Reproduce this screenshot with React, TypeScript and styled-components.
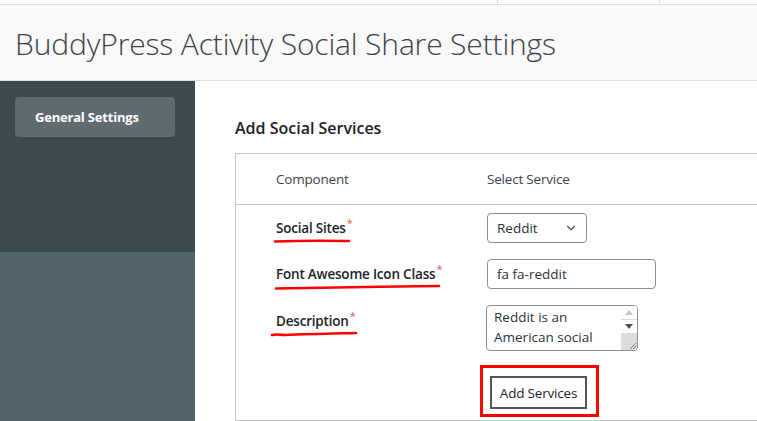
import React from "react";
import styled, { createGlobalStyle } from "styled-components";
import { ChevronDown } from "lucide-react";

const GlobalStyle = createGlobalStyle`
  html, body {
    margin: 0;
    padding: 0;
    background: #fff;
  }
  body {
    font-family: "Open Sans", "Noto Sans", sans-serif;
    color: #1d2327;
    overflow: hidden;
  }
`;

const Page = styled.div`
  width: 757px;
  height: 421px;
  display: flex;
  flex-direction: column;
  overflow: hidden;
`;

const TopStrip = styled.div`
  height: 4px;
  display: flex;
  border-bottom: 1px solid #dcdcde;
  background: #fff;
`;

const StripCell = styled.div<{ $w?: number }>`
  width: ${(p) => (p.$w ? `${p.$w}px` : "auto")};
  flex: ${(p) => (p.$w ? "none" : "1")};
  border-right: 1px solid #dcdcde;
  &:last-child {
    border-right: none;
  }
`;

const Header = styled.div`
  height: 76px;
  background: #f9f9f9;
  border-bottom: 1px solid #e0e0e0;
  display: flex;
  align-items: center;
  padding: 2px 0 0 15px;
  box-sizing: border-box;
`;

const Title = styled.h1`
  margin: 0;
  font-family: "Open Sans", sans-serif;
  font-weight: 300;
  font-size: 30px;
  letter-spacing: -0.15px;
  color: #3c434a;
`;

const Body = styled.div`
  flex: 1;
  display: flex;
  min-height: 0;
`;

const Sidebar = styled.div`
  width: 195px;
  flex: none;
  display: flex;
  flex-direction: column;
  background: #50646a;
`;

const SidebarNav = styled.div`
  height: 171px;
  background: #3c4a4f;
  padding: 16px 20px 0 15px;
  box-sizing: border-box;
`;

const NavItem = styled.div<{ $active?: boolean }>`
  height: 40px;
  border-radius: 4px;
  background: ${(p) => (p.$active ? "#5f6b70" : "transparent")};
  color: #fff;
  font-weight: 700;
  font-size: 13px;
  display: flex;
  align-items: center;
  padding-left: 20px;
  letter-spacing: -0.2px;
`;

const Main = styled.div`
  flex: 1;
  padding: 37px 0 0 40px;
  min-width: 0;
`;

const SectionTitle = styled.h2`
  margin: 0 0 15px;
  font-size: 16px;
  line-height: 20px;
  font-weight: 600;
  color: #1d2327;
`;

const TableBox = styled.div`
  width: 560px;
  border: 1px solid #c3c4c7;
  background: #fff;
  padding-bottom: 3px;
`;

const Row = styled.div<{ $head?: boolean; $gap?: number }>`
  display: grid;
  grid-template-columns: 251px 1fr;
  align-items: ${(p) => (p.$head ? "center" : "start")};
  height: ${(p) => (p.$head ? "50px" : "auto")};
  border-bottom: ${(p) => (p.$head ? "1px solid #c3c4c7" : "none")};
  margin-top: ${(p) => (p.$head ? 0 : p.$gap ?? 16)}px;
`;

const HeadCell = styled.div<{ $first?: boolean }>`
  font-size: 13.5px;
  color: #3c434a;
  padding-left: ${(p) => (p.$first ? "40px" : "0")};
  letter-spacing: -0.2px;
`;

const LabelCell = styled.div<{ $top?: number }>`
  padding: ${(p) => p.$top ?? 3}px 0 0 40px;
  height: 30px;
  box-sizing: border-box;
`;

const LabelWrap = styled.div`
  display: inline-flex;
  flex-direction: column;
`;

const LabelText = styled.span`
  font-size: 13.5px;
  line-height: 20px;
  height: 20px;
  font-weight: 600;
  color: #1d2327;
  letter-spacing: -0.2px;
  white-space: nowrap;
`;

const Star = styled.span`
  color: #e65a5a;
  font-size: 11px;
  font-weight: 400;
  position: relative;
  top: -6px;
  margin-left: 1px;
`;

const Ink = styled.svg<{ $dx: number }>`
  display: block;
  margin-left: ${(p) => p.$dx}px;
  margin-top: 0;
  overflow: visible;
`;

const Control = styled.div`
  font-size: 13.5px;
  color: #2c3338;
`;

const SelectBox = styled.div`
  width: 100px;
  height: 30px;
  box-sizing: border-box;
  border: 1px solid #8c8f94;
  border-radius: 4px;
  display: flex;
  align-items: center;
  justify-content: space-between;
  padding: 0 8px 0 9px;
  color: #50575e;
  span {
    color: #2c3338;
  }
`;

const TextInput = styled.div`
  width: 169px;
  height: 30px;
  box-sizing: border-box;
  border: 1px solid #8c8f94;
  border-radius: 4px;
  display: flex;
  align-items: center;
  padding-left: 9px;
`;

const AreaBox = styled.div`
  width: 152px;
  height: 46px;
  box-sizing: border-box;
  border: 1px solid #8c8f94;
  border-radius: 4px;
  display: flex;
  overflow: hidden;
  margin-left: -1px;
`;

const AreaText = styled.div`
  flex: 1;
  padding: 1px 0 0 7px;
  line-height: 20px;
  white-space: nowrap;
`;

const ScrollBar = styled.div`
  width: 16px;
  display: flex;
  flex-direction: column;
  background: #f1f1f1;
`;

const ScrollBtn = styled.div<{ $dim?: boolean }>`
  height: 13px;
  display: flex;
  align-items: center;
  justify-content: center;
  background: #fff;
  color: ${(p) => (p.$dim ? "#c2c2c2" : "#505050")};
  border-bottom: ${(p) => (p.$dim ? "1px solid #d8d8d8" : "none")};
`;

const ScrollTrack = styled.div`
  flex: 1;
  background: #dcdcdc;
  display: flex;
  align-items: flex-end;
  justify-content: flex-end;
`;

const RedFrame = styled.div`
  display: inline-block;
  border: 3px solid #ff0000;
  padding: 8px 9px 5px 7px;
  margin-left: -7px;
`;

const AddButton = styled.button`
  width: 97px;
  height: 33px;
  border: 2px solid #555;
  background: #fff;
  font-family: "Open Sans", sans-serif;
  font-size: 13.5px;
  color: #1d2327;
  padding: 0;
  letter-spacing: -0.2px;
`;

type Field = {
  label: string;
  inkWidth: number;
  inkDx: number;
  inkPath: string;
  top?: number;
  control: React.ReactNode;
};

function Underline({ w, dx, d }: { w: number; dx: number; d: string }) {
  return (
    <Ink $dx={dx} width={w} height={6} viewBox={`0 0 ${w} 6`}>
      <path d={d} stroke="#ff0000" strokeWidth={2.6} fill="none" strokeLinecap="round" />
    </Ink>
  );
}

function Triangle({ up }: { up?: boolean }) {
  return (
    <svg width="8" height="5" viewBox="0 0 8 5">
      <path d={up ? "M0 5 L4 0 L8 5 Z" : "M0 0 L8 0 L4 5 Z"} fill="currentColor" />
    </svg>
  );
}

export default function App() {
  const fields: Field[] = [
    {
      label: "Social Sites",
      inkWidth: 76,
      inkDx: -2,
      inkPath: "M1 3.5 C 25 2.5, 50 2.5, 75 3",
      control: (
        <SelectBox>
          <span>Reddit</span>
          <ChevronDown size={14} strokeWidth={2.2} />
        </SelectBox>
      ),
    },
    {
      label: "Font Awesome Icon Class",
      inkWidth: 165,
      inkDx: -1,
      inkPath: "M1 4.5 C 50 3.5, 110 2.5, 164 2",
      control: <TextInput>fa fa-reddit</TextInput>,
    },
    {
      label: "Description",
      inkWidth: 86,
      inkDx: -5,
      inkPath: "M1 4 C 4 3, 8 3.5, 14 4 C 40 3, 65 2.5, 85 2",
      top: 4,
      control: (
        <AreaBox>
          <AreaText>
            Reddit is an
            <br />
            American social
          </AreaText>
          <ScrollBar>
            <ScrollBtn $dim>
              <Triangle up />
            </ScrollBtn>
            <ScrollBtn>
              <Triangle />
            </ScrollBtn>
            <ScrollTrack>
              <svg width="9" height="9" viewBox="0 0 9 9">
                <path d="M8 2 L2 8 M8 5 L5 8" stroke="#777" strokeWidth="1" />
              </svg>
            </ScrollTrack>
          </ScrollBar>
        </AreaBox>
      ),
    },
  ];

  return (
    <Page>
      <GlobalStyle />
      <TopStrip>
        <StripCell $w={497} />
        <StripCell $w={161} />
        <StripCell />
      </TopStrip>
      <Header>
        <Title>BuddyPress Activity Social Share Settings</Title>
      </Header>
      <Body>
        <Sidebar>
          <SidebarNav>
            <NavItem $active>General Settings</NavItem>
          </SidebarNav>
        </Sidebar>
        <Main>
          <SectionTitle>Add Social Services</SectionTitle>
          <TableBox>
            <Row $head>
              <HeadCell $first>Component</HeadCell>
              <HeadCell>Select Service</HeadCell>
            </Row>
            {fields.map((f, i) => (
              <Row key={f.label} $gap={i === 0 ? 8 : 16}>
                <LabelCell $top={f.top}>
                  <LabelWrap>
                    <LabelText>
                      {f.label}
                      <Star>*</Star>
                    </LabelText>
                    <Underline w={f.inkWidth} dx={f.inkDx} d={f.inkPath} />
                  </LabelWrap>
                </LabelCell>
                <Control>{f.control}</Control>
              </Row>
            ))}
            <Row $gap={14}>
              <div />
              <Control>
                <RedFrame>
                  <AddButton>Add Services</AddButton>
                </RedFrame>
              </Control>
            </Row>
          </TableBox>
        </Main>
      </Body>
    </Page>
  );
}
